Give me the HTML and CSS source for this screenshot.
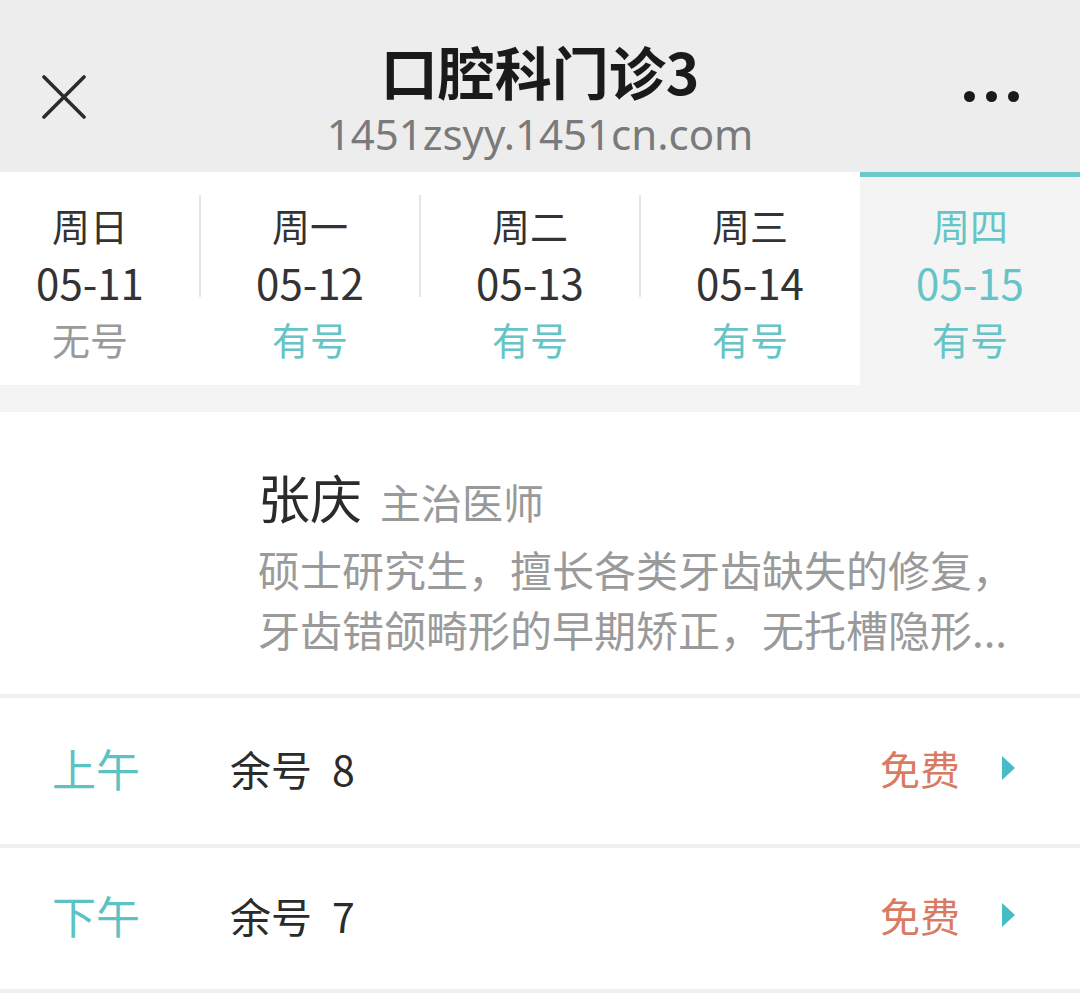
FILE: index.html
```html
<!DOCTYPE html>
<html lang="zh-CN">
<head>
    <meta charset="UTF-8">
    <meta name="viewport" content="width=device-width, initial-scale=1.0">
    <title>口腔科门诊3</title>
    <link rel="stylesheet" href="styles.css">
</head>
<body>

    <!-- 顶部标题栏 -->
    <div class="topbar">
        <div class="close-btn">
            <svg width="44" height="44" viewBox="0 0 44 44">
                <path d="M2 2 L42 42 M42 2 L2 42" stroke="#2b2b2b" stroke-width="3.6" stroke-linecap="round" fill="none"/>
            </svg>
        </div>
        <div class="title-box">
            <div class="title">口腔科门诊3</div>
            <div class="url">1451zsyy.1451cn.com</div>
        </div>
        <div class="more-btn">
            <span class="dot"></span><span class="dot"></span><span class="dot"></span>
        </div>
    </div>

    <!-- 日期选择 -->
    <div class="tabs">
        <div class="tab-track">
            <div class="tab split">
                <div class="week">周日</div>
                <div class="date">05-11</div>
                <div class="state none">无号</div>
            </div>
            <div class="tab split">
                <div class="week">周一</div>
                <div class="date">05-12</div>
                <div class="state">有号</div>
            </div>
            <div class="tab split">
                <div class="week">周二</div>
                <div class="date">05-13</div>
                <div class="state">有号</div>
            </div>
            <div class="tab">
                <div class="week">周三</div>
                <div class="date">05-14</div>
                <div class="state">有号</div>
            </div>
            <div class="tab active">
                <div class="week">周四</div>
                <div class="date">05-15</div>
                <div class="state">有号</div>
            </div>
        </div>
    </div>

    <div class="gap"></div>

    <!-- 医生信息 -->
    <div class="doctor">
        <div class="doctor-head">
            <span class="doctor-name">张庆</span>
            <span class="doctor-title">主治医师</span>
        </div>
        <div class="doctor-desc">
            硕士研究生，擅长各类牙齿缺失的修复，<br>牙齿错颌畸形的早期矫正，无托槽隐形...
        </div>
    </div>

    <!-- 号源 -->
    <div class="slot">
        <span class="period">上午</span>
        <span class="remain">余号<span class="num">8</span></span>
        <span class="fee">免费</span>
        <span class="arrow"></span>
    </div>
    <div class="slot">
        <span class="period">下午</span>
        <span class="remain">余号<span class="num">7</span></span>
        <span class="fee">免费</span>
        <span class="arrow"></span>
    </div>

</body>
</html>
```

FILE: styles.css
```css
body {
    margin: 0;
    font-family: "Noto Sans CJK SC", "Noto Sans", sans-serif;
    background-color: #ffffff;
    color: #333333;
    overflow: hidden;
}

/* 顶部标题栏 */
.topbar {
    display: grid;
    grid-template-columns: 1fr auto 1fr;
    height: 172px;
    box-sizing: border-box;
    padding-top: 41px;
    background-color: #ededed;
}
.close-btn {
    padding-left: 42px;
    margin-top: 34px;
}
.close-btn svg {
    display: block;
}
.title-box {
    text-align: center;
}
.title {
    font-size: 57px;
    font-weight: bold;
    line-height: 58px;
    color: #1a1a1a;
}
.url {
    margin-top: 5px;
    font-family: "Noto Sans", sans-serif;
    font-size: 42px;
    line-height: 60px;
    color: #7a7a7a;
}
.more-btn {
    display: flex;
    justify-content: flex-end;
    gap: 11px;
    padding-right: 61px;
    margin-top: 50px;
}
.dot {
    width: 11px;
    height: 11px;
    border-radius: 50%;
    background-color: #1a1a1a;
}

/* 日期选择 */
.tabs {
    overflow: hidden;
    background-color: #ffffff;
}
.tab-track {
    display: flex;
    margin-left: -20px;
}
.tab {
    position: relative;
    flex: none;
    width: 220px;
    height: 213px;
    box-sizing: border-box;
    padding-top: 24px;
    text-align: center;
    line-height: 57px;
}
.tab.split::after {
    content: "";
    position: absolute;
    right: -1px;
    top: 23px;
    width: 2px;
    height: 102px;
    background-color: #e6e6e6;
}
.week {
    font-size: 38px;
}
.date {
    font-size: 42px;
}
.state {
    font-size: 38px;
    color: #66c4c6;
}
.state.none {
    color: #9a9a9a;
}
.tab.active {
    padding-top: 19px;
    border-top: 5px solid #6cc8c8;
    background-color: #f4f4f4;
    color: #66c4c6;
}

.gap {
    height: 27px;
    background-color: #f4f4f4;
}

/* 医生信息 */
.doctor {
    padding: 55px 40px 35px 258px;
    border-bottom: 4px solid #eef1f1;
}
.doctor-head {
    display: flex;
    align-items: baseline;
    line-height: 60px;
}
.doctor-name {
    font-size: 52px;
    color: #2b2b2b;
}
.doctor-title {
    margin-left: 18px;
    font-size: 41px;
    color: #999999;
}
.doctor-desc {
    margin-top: 8px;
    font-size: 42px;
    line-height: 60px;
    color: #9a9a9a;
    white-space: nowrap;
}

/* 号源 */
.slot {
    display: flex;
    align-items: center;
    height: 150px;
    box-sizing: border-box;
    padding: 0 65px 6px 52px;
    border-bottom: 4px solid #eef1f1;
}
.slot + .slot {
    height: 145px;
    padding-bottom: 8px;
}
.period {
    width: 178px;
    font-size: 44px;
    color: #5cc2c4;
}
.remain {
    font-size: 41px;
    color: #2b2b2b;
}
.num {
    margin-left: 20px;
}
.fee {
    margin-left: auto;
    font-size: 40px;
    color: #d97a62;
}
.arrow {
    width: 0;
    height: 0;
    margin-left: 42px;
    border-left: 13px solid #45bcc6;
    border-top: 12px solid transparent;
    border-bottom: 12px solid transparent;
}
```
